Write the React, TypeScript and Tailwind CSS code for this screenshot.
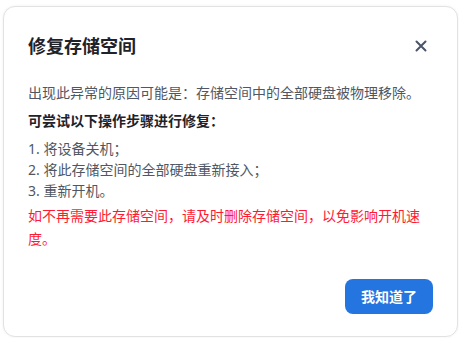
import React from "react";

export default function App() {
  return (
    <div
      className="w-[459px] h-[338px] bg-white overflow-hidden pt-[6px] pl-[3px]"
      style={{ fontFamily: '"Noto Sans", "Noto Sans CJK SC", sans-serif' }}
    >
      <div className="w-[455px] h-[331px] rounded-[12px] border border-[#e2e2e2] bg-white shadow-[0_0_3px_rgba(0,0,0,0.06)] flex flex-col pl-[24px] pr-[24px]">
        <div className="flex items-center justify-between pt-[25px]">
          <h1 className="text-[18px] leading-[28px] font-bold text-[#1f2329]">修复存储空间</h1>
          <button className="w-[24px] h-[24px] flex items-center justify-center text-[#4a5568]">
            <svg width="12" height="12" viewBox="0 0 12 12" fill="none">
              <path d="M1.5 1.5L10.5 10.5M10.5 1.5L1.5 10.5" stroke="currentColor" strokeWidth="2" strokeLinecap="round" />
            </svg>
          </button>
        </div>
        <div className="mt-[22px] text-[14px] text-[#505763]">
          <p className="leading-[22px]">出现此异常的原因可能是：存储空间中的全部硬盘被物理移除。</p>
          <p className="leading-[22px] mt-[6px] font-bold text-[#1f2329]">可尝试以下操作步骤进行修复：</p>
          <div className="mt-[6px] leading-[21px]">
            <p>1. 将设备关机；</p>
            <p>2. 将此存储空间的全部硬盘重新接入；</p>
            <p>3. 重新开机。</p>
          </div>
          <p className="mt-[3px] leading-[23px] text-[#ff1a33]">
            如不再需要此存储空间，请及时删除存储空间，以免影响开机速度。
          </p>
        </div>
        <div className="flex justify-end mt-auto mb-[22px]">
          <button className="h-[35px] px-[16px] rounded-[8px] bg-[#2575e0] text-white text-[14px] font-bold">
            我知道了
          </button>
        </div>
      </div>
    </div>
  );
}
